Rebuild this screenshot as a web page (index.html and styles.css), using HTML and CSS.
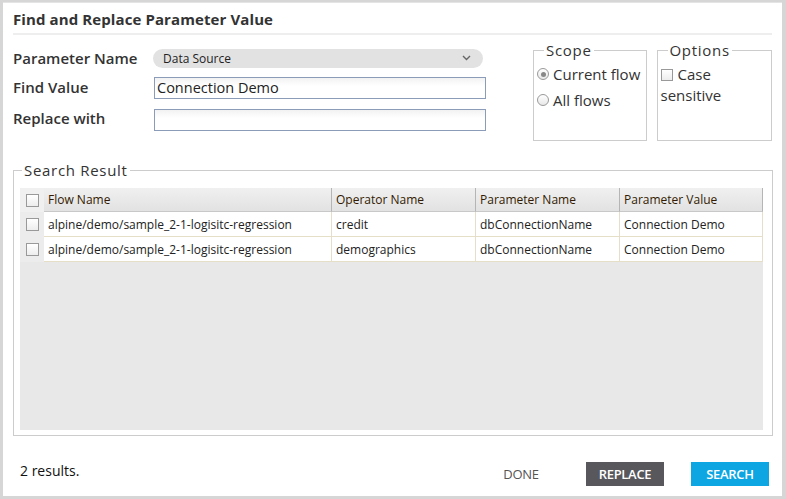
FILE: index.html
```html
<!DOCTYPE html>
<html>
<head>
<meta charset="utf-8">
<link rel="stylesheet" href="styles.css">
</head>
<body>
<div class="dialog">
  <div class="title">Find and Replace Parameter Value</div>
  <div class="top">
    <div class="form">
      <div class="row r1">
        <label class="lbl">Parameter Name</label>
        <div class="select"><span>Data Source</span>
          <svg class="chev" width="9" height="6" viewBox="0 0 9 6"><path d="M1 1 L4.5 4.5 L8 1" fill="none" stroke="#666" stroke-width="1.4"/></svg>
        </div>
      </div>
      <div class="row r2">
        <label class="lbl">Find Value</label>
        <div class="input">Connection Demo</div>
      </div>
      <div class="row r3">
        <label class="lbl">Replace with</label>
        <div class="input"></div>
      </div>
    </div>
    <fieldset class="box scope">
      <legend>Scope</legend>
      <div class="opt"><span class="radio on"></span>Current flow</div>
      <div class="opt"><span class="radio"></span>All flows</div>
    </fieldset>
    <fieldset class="box options">
      <legend>Options</legend>
      <div class="opt2"><span class="check"></span>Case sensitive</div>
    </fieldset>
  </div>
  <fieldset class="results">
    <legend>Search Result</legend>
    <div class="grid">
      <div class="tr head">
        <div class="cb"><span class="check"></span></div>
        <div class="td c1">Flow Name</div>
        <div class="td c2">Operator Name</div>
        <div class="td c3">Parameter Name</div>
        <div class="td c4">Parameter Value</div>
      </div>
      <div class="tr">
        <div class="cb"><span class="check"></span></div>
        <div class="td c1">alpine/demo/sample_2-1-logisitc-regression</div>
        <div class="td c2">credit</div>
        <div class="td c3">dbConnectionName</div>
        <div class="td c4">Connection Demo</div>
      </div>
      <div class="tr">
        <div class="cb"><span class="check"></span></div>
        <div class="td c1">alpine/demo/sample_2-1-logisitc-regression</div>
        <div class="td c2">demographics</div>
        <div class="td c3">dbConnectionName</div>
        <div class="td c4">Connection Demo</div>
      </div>
    </div>
  </fieldset>
  <div class="footer">
    <span class="count">2 results.</span>
    <button class="btn done">DONE</button>
    <button class="btn replace">REPLACE</button>
    <button class="btn search">SEARCH</button>
  </div>
</div>
</body>
</html>
```
FILE: styles.css
```css
html, body { margin: 0; padding: 0; }
body {
  background: #d6d6d6;
  font-family: "Open Sans", "DejaVu Sans", sans-serif;
  color: #222;
  width: 786px;
  height: 499px;
  overflow: hidden;
}
.dialog {
  margin: 2px 4px 0 3px;
  height: 494px;
  background: #fff;
  box-sizing: border-box;
  border-top: 1px solid #e4e4e4;
  padding: 0 10px;
  display: flex;
  flex-direction: column;
}
.title {
  font-weight: bold;
  font-size: 15px;
  letter-spacing: 0.1px;
  color: #333;
  padding: 6px 0 4px 0;
  line-height: 20px;
  border-bottom: 2px solid #eeeeee;
}
.top {
  display: flex;
  align-items: flex-start;
  margin-top: 12px;
}
.form {
  width: 473px;
  display: flex;
  flex-direction: column;
}
.row {
  display: flex;
  align-items: center;
  height: 22px;
}
.r2 { margin-top: 8px; }
.r3 { margin-top: 10px; }
.r2 .lbl { margin-top: -2px; }
.r3 .lbl { margin-top: -4px; }
.lbl {
  width: 140px;
  font-weight: 600;
  font-size: 15px;
  color: #333;
}
.select {
  width: 330px;
  height: 19px;
  border-radius: 10px;
  background: #e2e2e2;
  display: flex;
  align-items: center;
  justify-content: space-between;
  padding: 0 12px 0 10px;
  box-sizing: border-box;
  font-size: 12px;
  color: #222;
}
.input {
  width: 332px;
  height: 22px;
  margin-left: 1px;
  box-sizing: border-box;
  border: 1px solid #8a9cb8;
  background: linear-gradient(#f2f2f2, #fff 40%);
  font-size: 14.5px;
  line-height: 20px;
  padding-left: 2px;
  color: #222;
}
.box {
  margin: 0;
  padding: 0 0 0 3px;
  border: 1px solid #cccccc;
  height: 100px;
  box-sizing: border-box;
  font-size: 15px;
  color: #333;
}
.box legend, .results legend {
  font-size: 15px;
  padding: 0 2px;
  margin-left: 7px;
  letter-spacing: 0.7px;
  color: #333;
  line-height: 18px;
}
.scope { width: 114px; margin-left: 47px; margin-top: -6px; }
.options { width: 116px; margin-left: 10px; margin-top: -6px; }
.opt {
  display: flex;
  align-items: center;
  height: 26px;
  line-height: 20px;
}
.opt:first-of-type { margin-top: 2px; }
.radio {
  width: 12px;
  height: 12px;
  border-radius: 50%;
  border: 1px solid #999;
  background: linear-gradient(#fff, #e8e8e8);
  margin-right: 4px;
  box-sizing: border-box;
  position: relative;
}
.radio.on::after {
  content: "";
  position: absolute;
  left: 2.5px; top: 2.5px;
  width: 5px; height: 5px;
  border-radius: 50%;
  background: #888;
}
.opt2 {
  margin-top: 5px;
  line-height: 21px;
  padding-right: 6px;
}
.check {
  display: inline-block;
  width: 12px;
  height: 12px;
  border: 1px solid #999;
  box-sizing: border-box;
  background: linear-gradient(#fff, #ededed);
  vertical-align: -1px;
  margin-right: 5px;
}
.results {
  margin: 20px 0 0 0;
  padding: 0 9px 6px 6px;
  border: 1px solid #cccccc;
  height: 275px;
  box-sizing: border-box;
}
.results legend { margin-left: 2px; }
.grid {
  background: #e8e8e8;
  height: 242px;
  margin-top: 9px;
}
.tr {
  display: flex;
  height: 24px;
  font-size: 12px;
  color: #222;
}
.tr:not(.head) .td { background: #fff; border-bottom: 1px solid #e6dfc8; border-right: 1px solid #e6dfc8; }
.tr:not(.head) { height: 25px; }
.cb {
  width: 24px;
  display: flex;
  align-items: center;
  justify-content: center;
  background: #ececec;
}
.cb .check { margin: 0; width: 13px; height: 13px; }
.td {
  box-sizing: border-box;
  padding-left: 4px;
  display: flex;
  align-items: center;
  white-space: nowrap;
  overflow: hidden;
}
.head .td {
  background: linear-gradient(#f0f0f0, #e2e2e2);
  border-right: 1px solid #b5b5b5;
  border-bottom: 1px solid #c8c8c8;
  color: #331a00;
}
.head .cb { background: #f0f0f0; }
.c1 { width: 288px; }
.c2 { width: 144px; }
.c3 { width: 144px; }
.c4 { width: 143px; }
.footer {
  display: flex;
  align-items: flex-start;
  padding: 26px 3px 0 7px;
}
.count { font-size: 14px; color: #111; flex: 1; line-height: 20px; margin-top: -1px; }
.btn {
  font-family: "Open Sans", sans-serif;
  border: 0;
  font-size: 13px;
  height: 24px;
  padding: 0;
  letter-spacing: -0.3px;
}
.done { background: none; color: #555; width: 38px; margin-right: 46px; }
.replace { background: #58575c; color: #fff; font-weight: 600; width: 78px; margin-right: 27px; }
.search { background: #0ea5e3; color: #fff; font-weight: 600; width: 78px; }
```
